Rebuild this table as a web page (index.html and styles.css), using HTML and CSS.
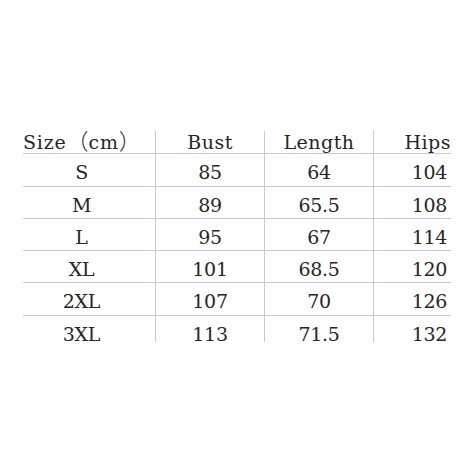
FILE: index.html
```html
<!DOCTYPE html>
<html>
<head>
<meta charset="utf-8">
<link rel="stylesheet" href="styles.css">
</head>
<body>
<div class="chart">
  <div class="cell head first">Size<span class="cjk">（</span>cm<span class="cjk">）</span></div>
  <div class="cell head">Bust</div>
  <div class="cell head">Length</div>
  <div class="cell head last">Hips</div>

  <div class="cell first">S</div><div class="cell">85</div><div class="cell">64</div><div class="cell last">104</div>
  <div class="cell first">M</div><div class="cell">89</div><div class="cell">65.5</div><div class="cell last">108</div>
  <div class="cell first">L</div><div class="cell">95</div><div class="cell">67</div><div class="cell last">114</div>
  <div class="cell first">XL</div><div class="cell">101</div><div class="cell">68.5</div><div class="cell last">120</div>
  <div class="cell first">2XL</div><div class="cell">107</div><div class="cell">70</div><div class="cell last">126</div>
  <div class="cell first end">3XL</div><div class="cell end">113</div><div class="cell end">71.5</div><div class="cell last end">132</div>
</div>
</body>
</html>
```

FILE: styles.css
```css
html, body {
  margin: 0;
  padding: 0;
  background: #ffffff;
}

body {
  width: 474px;
  height: 474px;
  padding-top: 131px;
  box-sizing: border-box;
}

.chart {
  margin-left: 23px;
  width: 428px;
  display: grid;
  grid-template-columns: 132px 109px 109px 78px;
  grid-template-rows: 23px 33px 32px 32px 32px 33px 26px;
  font-family: "DejaVu Serif", serif;
  font-size: 19px;
  line-height: 22px;
  color: #262626;
  letter-spacing: -0.3px;
}

.cjk {
  font-family: "Noto Sans CJK SC", sans-serif;
  font-weight: 300;
  letter-spacing: 0;
  font-size: 22px;
  line-height: 0;
}

.cell {
  box-sizing: border-box;
  border-bottom: 1px solid #c5c8da;
  border-left: 1px solid #c5c8da;
  text-align: center;
  padding-top: 7px;
  white-space: nowrap;
}

.cell.head {
  padding-top: 0;
  letter-spacing: 0.5px;
}

.cell.first {
  border-left: none;
  padding-right: 15px;
}

.cell.head.first {
  text-align: left;
  padding-right: 0;
  letter-spacing: 0.8px;
}

.cell.last {
  text-align: right;
  padding-right: 4px;
}

.cell.head.last {
  padding-right: 0;
  overflow: visible;
}

.cell.end {
  border-bottom: none;
}
```
